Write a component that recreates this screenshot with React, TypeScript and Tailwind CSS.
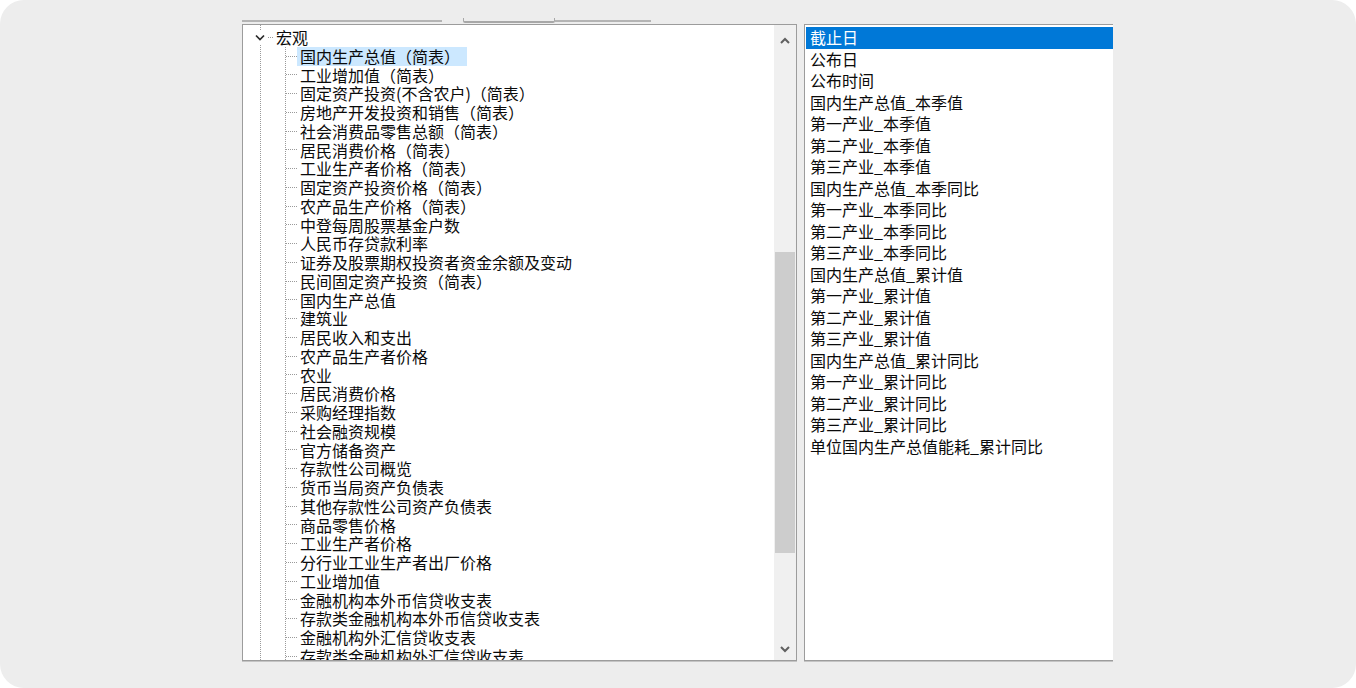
import React from "react";

const TREE_ITEMS = [
  "国内生产总值（简表）",
  "工业增加值（简表）",
  "固定资产投资(不含农户)（简表）",
  "房地产开发投资和销售（简表）",
  "社会消费品零售总额（简表）",
  "居民消费价格（简表）",
  "工业生产者价格（简表）",
  "固定资产投资价格（简表）",
  "农产品生产价格（简表）",
  "中登每周股票基金户数",
  "人民币存贷款利率",
  "证券及股票期权投资者资金余额及变动",
  "民间固定资产投资（简表）",
  "国内生产总值",
  "建筑业",
  "居民收入和支出",
  "农产品生产者价格",
  "农业",
  "居民消费价格",
  "采购经理指数",
  "社会融资规模",
  "官方储备资产",
  "存款性公司概览",
  "货币当局资产负债表",
  "其他存款性公司资产负债表",
  "商品零售价格",
  "工业生产者价格",
  "分行业工业生产者出厂价格",
  "工业增加值",
  "金融机构本外币信贷收支表",
  "存款类金融机构本外币信贷收支表",
  "金融机构外汇信贷收支表",
  "存款类金融机构外汇信贷收支表",
];

const FIELDS = [
  "截止日",
  "公布日",
  "公布时间",
  "国内生产总值_本季值",
  "第一产业_本季值",
  "第二产业_本季值",
  "第三产业_本季值",
  "国内生产总值_本季同比",
  "第一产业_本季同比",
  "第二产业_本季同比",
  "第三产业_本季同比",
  "国内生产总值_累计值",
  "第一产业_累计值",
  "第二产业_累计值",
  "第三产业_累计值",
  "国内生产总值_累计同比",
  "第一产业_累计同比",
  "第二产业_累计同比",
  "第三产业_累计同比",
  "单位国内生产总值能耗_累计同比",
];

function ScrollArrow({ dir }: { dir: "up" | "down" }) {
  return (
    <svg width="10" height="7" viewBox="0 0 10 7">
      <polyline
        points={dir === "up" ? "1,6 5,2 9,6" : "1,1 5,5 9,1"}
        fill="none"
        stroke="#606060"
        strokeWidth={2}
      />
    </svg>
  );
}

export default function App() {
  return (
    <div className="w-[1356px] h-[688px] bg-white font-['Noto_Sans_CJK_SC','Microsoft_YaHei',sans-serif] text-[16px] text-[#0a0a0a]">
      <div className="h-full rounded-[24px] bg-[#ededed] pl-[242px] pt-[18px] overflow-hidden">
        {/* bottoms of the controls above, cut off */}
        <div className="flex h-[5px]">
          <div className="w-[200px] h-[4px] border-b-2 border-[#b4b4b4]" />
          <div className="w-[21px]" />
          <div className="w-[92px] h-[5px] border-x border-b-2 border-[#a8a8a8] rounded-b-[2px]" />
          <div className="w-[96px] h-[4px] border-b-2 border-[#b4b4b4]" />
        </div>

        <div className="flex mt-[1px]">
          {/* Tree view */}
          <div className="w-[555px] h-[637px] flex bg-white border border-[#9c9c9c] shadow-[0_1px_0_#c4c4c4]">
            <div className="flex-1 overflow-hidden pl-[17px]">
              <div className="h-full border-l border-dotted border-[#9a9a9a] pt-[3px]">
                <div className="flex items-center h-[18.75px] leading-[18.75px]">
                  <span className="-ml-[9px] w-[15px] h-[14px] flex items-center justify-center bg-white">
                    <svg width="10" height="7" viewBox="0 0 10 7">
                      <polyline points="1,1.5 5,5.5 9,1.5" fill="none" stroke="#2a2a2a" strokeWidth={1.7} />
                    </svg>
                  </span>
                  <span className="ml-[1px] w-[5px] border-t border-dotted border-[#9a9a9a]" />
                  <span className="ml-[3px] whitespace-nowrap">宏观</span>
                </div>
                <div className="ml-[24px] border-l border-dotted border-[#9a9a9a]">
                  {TREE_ITEMS.map((item, i) => (
                    <div key={i} className="flex items-center h-[18.75px] leading-[18.75px]">
                      <span className="w-[11px] border-t border-dotted border-[#9a9a9a]" />
                      <span
                        className={`pl-[3px] pr-[7px] whitespace-nowrap ${i === 0 ? "bg-[#cce8ff]" : ""}`}
                      >
                        {item}
                      </span>
                    </div>
                  ))}
                </div>
              </div>
            </div>

            {/* Scrollbar */}
            <div className="w-[22px] bg-[#f0f0f0] flex flex-col">
              <div className="h-[30px] flex items-center justify-center">
                <ScrollArrow dir="up" />
              </div>
              <div className="h-[197px]" />
              <div className="h-[301px] mx-[1px] bg-[#cdcdcd]" />
              <div className="flex-1" />
              <div className="h-[22px] flex items-center justify-center">
                <ScrollArrow dir="down" />
              </div>
            </div>
          </div>

          {/* Field list */}
          <div className="ml-[7px] w-[309px] h-[637px] bg-white border-l border-t border-b border-[#9c9c9c] shadow-[0_1px_0_#c4c4c4] pt-[2px] pl-[1px] overflow-hidden">
            {FIELDS.map((f, i) => (
              <div
                key={i}
                className={`h-[21.5px] leading-[21.5px] pl-[4px] whitespace-nowrap ${
                  i === 0 ? "bg-[#0078d7] text-white" : ""
                }`}
              >
                {f}
              </div>
            ))}
          </div>
        </div>
      </div>
    </div>
  );
}
